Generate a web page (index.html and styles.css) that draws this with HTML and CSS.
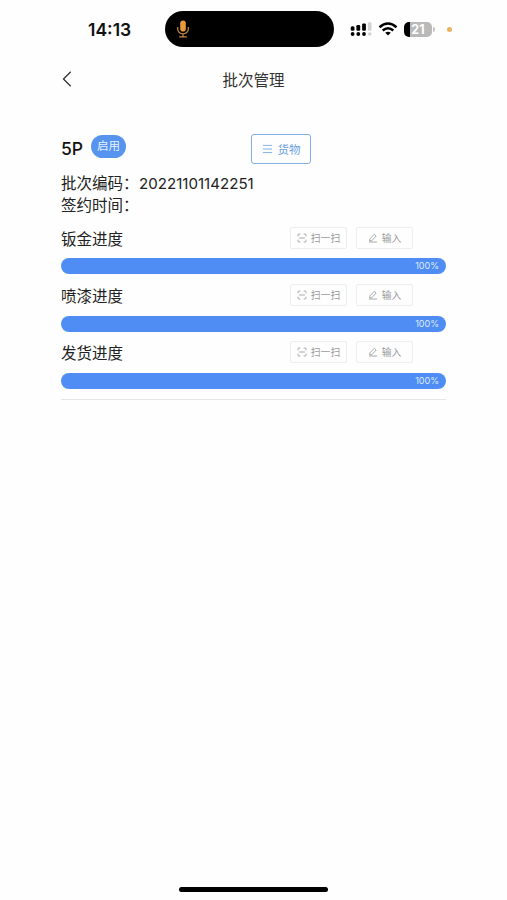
FILE: index.html
```html
<!DOCTYPE html>
<html lang="zh-CN">
  <head>
    <meta charset="utf-8">
    <meta name="viewport" content="width=device-width, initial-scale=1.0">
    <title>批次管理</title>
    <link rel="stylesheet" href="styles.css">
  </head>

  <body>
    <!-- Shared icons -->
    <svg class="hidden">
      <symbol id="icon-scan" viewBox="0 0 12 12">
        <path d="M4 1.2H2.3Q1.2 1.2 1.2 2.3V4M8 1.2h1.7q1.1 0 1.1 1.1V4M4 10.8H2.3Q1.2 10.8 1.2 9.7V8M8 10.8h1.7q1.1 0 1.1-1.1V8M2.5 6h7"/>
      </symbol>
      <symbol id="icon-edit" viewBox="0 0 12 12">
        <path d="M2.3 7.1 7.5 1.5 9.8 3.6 4.6 9.2 2 9.6zM1.3 10.8h9.5"/>
      </symbol>
    </svg>

    <div class="screen">
      <!-- Status bar -->
      <div class="status-bar">
        <div class="time">14:13</div>
        <div class="island">
          <svg class="mic" viewBox="0 0 14 20">
            <rect x="4.2" y="1.5" width="5.6" height="11" rx="2.8" fill="#e99b3c"/>
            <path d="M1.7 8v2.2a5.3 4.6 0 0 0 10.6 0V8M7 14.8v2.7M3.2 17.8h7.6" fill="none" stroke="#c98a43" stroke-width="1.2"/>
          </svg>
        </div>
        <svg class="signal" viewBox="0 0 22 15">
          <g fill="#000">
            <rect x="0.7" y="4.3" width="3.8" height="4.4" rx="1.5"/>
            <rect x="6.4" y="3" width="3.8" height="5.7" rx="1.2"/>
            <rect x="12.1" y="1.5" width="3.8" height="7.2" rx="1.2"/>
            <circle cx="2.6" cy="12" r="1.9"/>
            <circle cx="8.3" cy="12" r="1.9"/>
            <circle cx="14" cy="12" r="1.9"/>
          </g>
          <g fill="#d2d2d2">
            <rect x="17.9" y="0.2" width="3.6" height="8.5" rx="1"/>
            <circle cx="19.7" cy="12" r="1.8"/>
          </g>
        </svg>
        <svg class="wifi" viewBox="0 0 20 14">
          <path d="M1.5 5.2Q10-2.1 18.5 5.2M4.7 8.5q5.3-4.4 10.6 0" fill="none" stroke="#000" stroke-width="2.5"/>
          <path d="M7.2 10.8Q10 8.5 12.8 10.8L10 13.6z"/>
        </svg>
        <div class="battery"><span>21</span></div>
        <div class="mic-dot"></div>
      </div>

      <!-- Page heading -->
      <div class="nav-bar">
        <svg class="back" viewBox="0 0 10 16">
          <path d="M8.7.8 1.5 8l7.2 7.2" fill="none" stroke="#333" stroke-width="1.3"/>
        </svg>
        <div class="nav-title">批次管理</div>
      </div>

      <!-- Batch details -->
      <div class="batch">
        <div class="batch-head">
          <div class="batch-name">5P</div>
          <div class="badge">启用</div>
          <button class="goods-button">
            <svg class="icon" viewBox="0 0 12 12"><path d="M.5 1.7h11M.5 6h11M.5 10.3h11"/></svg>
            货物
          </button>
        </div>
        <div class="info"><span class="info-label">批次编码：</span><span class="code">20221101142251</span></div>
        <div class="info"><span class="info-label">签约时间：</span></div>

        <div class="progress-item">
          <div class="progress-head">
            <div class="progress-name">钣金进度</div>
            <button><svg class="icon"><use href="#icon-scan"/></svg>扫一扫</button>
            <button><svg class="icon"><use href="#icon-edit"/></svg>输入</button>
          </div>
          <div class="track"><div class="bar" style="width: 100%">100%</div></div>
        </div>

        <div class="progress-item">
          <div class="progress-head">
            <div class="progress-name">喷漆进度</div>
            <button><svg class="icon"><use href="#icon-scan"/></svg>扫一扫</button>
            <button><svg class="icon"><use href="#icon-edit"/></svg>输入</button>
          </div>
          <div class="track"><div class="bar" style="width: 100%">100%</div></div>
        </div>

        <div class="progress-item">
          <div class="progress-head">
            <div class="progress-name">发货进度</div>
            <button><svg class="icon"><use href="#icon-scan"/></svg>扫一扫</button>
            <button><svg class="icon"><use href="#icon-edit"/></svg>输入</button>
          </div>
          <div class="track"><div class="bar" style="width: 100%">100%</div></div>
        </div>
      </div>

      <div class="home-indicator"></div>
    </div>
  </body>
</html>
```

FILE: styles.css
```css
* {
  box-sizing: border-box;
}
body {
  margin: 0;
  background: #fefefe;
  color: #222;
  font-family: Inter, "Noto Sans CJK SC", sans-serif;
}
.hidden {
  display: none;
}
.screen {
  display: flex;
  flex-direction: column;
  height: 900px;
}
/* Status bar */
.status-bar {
  display: flex;
  align-items: center;
  height: 58px;
  padding-left: 88px;
}
.time {
  width: 77px;
  color: #111;
  font-size: 17.5px;
  font-weight: 600;
}
.island {
  display: flex;
  align-items: center;
  width: 169px;
  height: 36px;
  padding-left: 11px;
  border-radius: 18px;
  background: #000;
}
.mic {
  width: 14px;
  height: 20px;
}
.signal {
  width: 22px;
  height: 15px;
  margin-left: 16px;
}
.wifi {
  width: 20px;
  height: 14px;
  margin-left: 6px;
}
.battery {
  position: relative;
  width: 28px;
  height: 15px;
  margin-left: 6px;
  border-radius: 5px;
  background: linear-gradient(to right, #000 6px, #b9b9b9 6px);
  color: #fff;
  font-size: 12.5px;
  font-weight: 700;
  line-height: 15px;
  text-align: center;
}
/* Battery terminal */
.battery::after {
  content: "";
  position: absolute;
  top: 5px;
  right: -3px;
  width: 2px;
  height: 5px;
  border-radius: 0 2px 2px 0;
  background: #c4c4c4;
}
.mic-dot {
  width: 5px;
  height: 5px;
  margin-left: 15px;
  border-radius: 50%;
  background: #e8b25f;
}
/* Page heading */
.nav-bar {
  display: grid;
  grid-template-columns: 10px 1fr 10px;
  align-items: center;
  height: 42px;
  padding: 0 62px;
}
.back {
  width: 10px;
  height: 16px;
}
.nav-title {
  color: #333;
  font-size: 15.5px;
  text-align: center;
}
/* Batch details */
.batch {
  margin: 34px 61px 0;
  padding-bottom: 10px;
  border-bottom: 1px solid #e6e6e6;
}
.batch-head {
  display: flex;
  height: 39px;
}
.batch-name {
  width: 30px;
  color: #111;
  font-size: 17.5px;
  font-weight: 500;
  line-height: 29px;
}
.badge {
  width: 35px;
  height: 23px;
  margin-top: 1px;
  border-radius: 12px;
  background: #5794ef;
  color: #e6f0ff;
  font-size: 11.5px;
  line-height: 23px;
  text-align: center;
}
button {
  display: flex;
  align-items: center;
  justify-content: center;
  padding: 0;
  background: transparent;
  font-family: inherit;
}
.icon {
  fill: none;
  stroke: currentColor;
}
.goods-button {
  gap: 5px;
  width: 60px;
  height: 30px;
  margin-left: 125px;
  border: 1.5px solid #83aee5;
  border-radius: 3px;
  color: #6c9fe3;
  font-size: 11.5px;
}
.goods-button .icon {
  width: 11px;
  height: 10px;
}
.info {
  height: 22px;
  font-size: 15.5px;
  line-height: 22px;
}
.info-label {
  display: inline-block;
  width: 78px;
}
.code {
  font-size: 15.1px;
}
/* Progress rows */
.progress-head {
  display: flex;
  align-items: center;
  gap: 9px;
  height: 41.3px;
}
.progress-name {
  width: 220px;
  font-size: 15.5px;
}
.progress-head button {
  gap: 4px;
  width: 57px;
  height: 22px;
  border: 1px solid #eee;
  border-radius: 2px;
  color: #999;
  font-size: 9.8px;
}
.progress-head .icon {
  width: 10px;
  height: 10px;
}
.bar {
  height: 16px;
  padding-right: 7px;
  border-radius: 8px;
  background: #4f8df5;
  color: #dce9ff;
  font-size: 9px;
  line-height: 16px;
  text-align: right;
}
/* Home indicator */
.home-indicator {
  width: 149px;
  height: 5px;
  margin: auto auto 8px 179px;
  border-radius: 3px;
  background: #000;
}
```
